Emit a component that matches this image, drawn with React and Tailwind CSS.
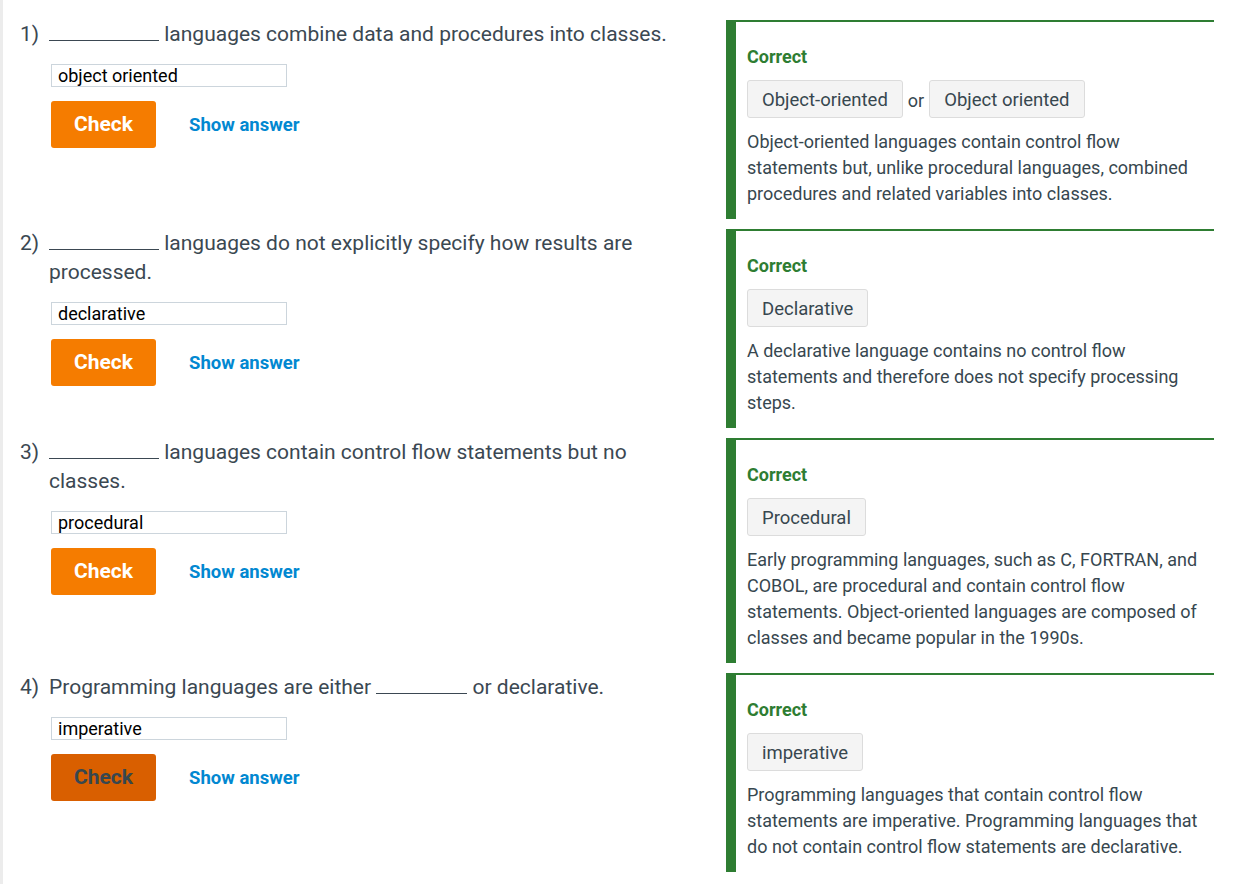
import React from "react";

const questions = [
  {
    num: "1)",
    before: "",
    blank: 110,
    after: " languages combine data and procedures into classes.",
    value: "object oriented",
    answers: ["Object-oriented", "Object oriented"],
    explanation:
      "Object-oriented languages contain control flow statements but, unlike procedural languages, combined procedures and related variables into classes.",
  },
  {
    num: "2)",
    before: "",
    blank: 110,
    after: " languages do not explicitly specify how results are processed.",
    value: "declarative",
    answers: ["Declarative"],
    explanation:
      "A declarative language contains no control flow statements and therefore does not specify processing steps.",
  },
  {
    num: "3)",
    before: "",
    blank: 110,
    after: " languages contain control flow statements but no classes.",
    value: "procedural",
    answers: ["Procedural"],
    explanation:
      "Early programming languages, such as C, FORTRAN, and COBOL, are procedural and contain control flow statements. Object-oriented languages are composed of classes and became popular in the 1990s.",
  },
  {
    num: "4)",
    before: "Programming languages are either ",
    blank: 91,
    after: " or declarative.",
    value: "imperative",
    answers: ["imperative"],
    explanation:
      "Programming languages that contain control flow statements are imperative. Programming languages that do not contain control flow statements are declarative.",
    active: true,
  },
];

function Question({ q }) {
  return (
    <div className="flex-1 pr-[40px]">
      <div className="flex text-[21px] leading-[29px] text-[#3b4852]">
        <div className="w-[29px] shrink-0">{q.num}</div>
        <div className="flex-1">
          {q.before}
          <span
            className="inline-block border-b border-[#3b4852] align-baseline h-[20px]"
            style={{ width: q.blank }}
          ></span>
          {q.after}
        </div>
      </div>
      <div className="pl-[2px]">
        <input
          readOnly
          value={q.value}
          className="mt-[15px] ml-[29px] block w-[236px] h-[23px] border border-[#ccd5dc] px-[6px] text-[18px] leading-[21px] text-black outline-none"
        />
        <div className="mt-[14px] ml-[29px] flex items-center">
          <button
            className={
              q.active
                ? "w-[105px] h-[47px] rounded-[3px] bg-[#d95f00] text-[#37474f] text-[21px] font-bold"
                : "w-[105px] h-[47px] rounded-[3px] bg-[#f57c00] text-white text-[21px] font-bold"
            }
          >
            Check
          </button>
          <span className="ml-[33px] pt-[2px] text-[18.5px] font-bold text-[#0288d1]">
            Show answer
          </span>
        </div>
      </div>
    </div>
  );
}

function Explanation({ q }) {
  return (
    <div className="w-[488px] shrink-0 border-l-[10px] border-t-2 border-[#2e7d32] pl-[11px] pr-[5px] pt-[22px] pb-[12px]">
      <div className="text-[18px] leading-[26px] font-bold text-[#2e7d32]">Correct</div>
      <div className="mt-[10px] flex items-center">
        {q.answers.map((a, i) => (
          <React.Fragment key={a}>
            {i > 0 && <span className="mx-[5px] pt-[2px] text-[18px] text-[#37474f]">or</span>}
            <span className="h-[38px] flex items-center px-[14px] pt-[3px] bg-[#f4f4f4] border border-[#dcdcdc] rounded-[3px] text-[18.5px] text-[#37474f]">
              {a}
            </span>
          </React.Fragment>
        ))}
      </div>
      <p className="mt-[11px] text-[18px] leading-[26px] text-[#37474f]">{q.explanation}</p>
    </div>
  );
}

export default function App() {
  return (
    <div
      className="min-h-screen bg-white border-l-[3px] border-[#ececec] pl-[17px] pr-[28px] pt-[20px]"
      style={{ fontFamily: "Roboto, 'Noto Sans', sans-serif" }}
    >
      {questions.map((q) => (
        <div key={q.num} className="flex items-start mb-[10px]">
          <Question q={q} />
          <Explanation q={q} />
        </div>
      ))}
    </div>
  );
}
